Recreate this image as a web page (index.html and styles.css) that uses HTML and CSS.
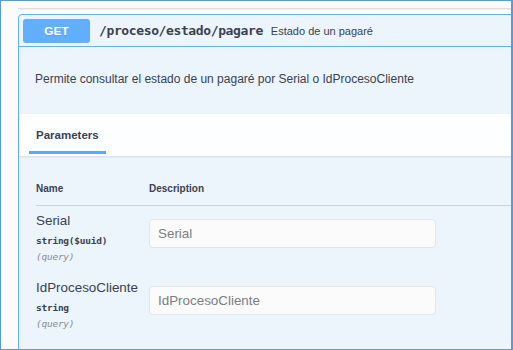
FILE: index.html
```html
<!DOCTYPE html>
<html lang="es">
<head>
<meta charset="utf-8">
<title>GET /proceso/estado/pagare</title>
<link rel="stylesheet" href="styles.css">
</head>
<body>
<div class="frame">
  <div class="topline"></div>
  <div class="opblock">
    <div class="summary">
      <span class="method">GET</span>
      <span class="path">/proceso/estado/pagare</span>
      <span class="summary-desc">Estado de un pagaré</span>
    </div>
    <div class="description">
      <p>Permite consultar el estado de un pagaré por Serial o IdProcesoCliente</p>
    </div>
    <div class="tab-header">
      <div class="tab"><h4>Parameters</h4></div>
    </div>
    <div class="params">
      <div class="param-head">
        <span class="col-name">Name</span>
        <span class="col-desc">Description</span>
      </div>
      <div class="param-row">
        <div class="col-name">
          <div class="param-name">Serial</div>
          <div class="param-type">string($uuid)</div>
          <div class="param-in">(query)</div>
        </div>
        <div class="col-desc">
          <input class="param-input" type="text" placeholder="Serial">
        </div>
      </div>
      <div class="param-row">
        <div class="col-name">
          <div class="param-name">IdProcesoCliente</div>
          <div class="param-type">string</div>
          <div class="param-in">(query)</div>
        </div>
        <div class="col-desc">
          <input class="param-input" type="text" placeholder="IdProcesoCliente">
        </div>
      </div>
    </div>
  </div>
</div>
</body>
</html>
```
FILE: styles.css
```css
* { box-sizing: border-box; }
html, body { margin: 0; padding: 0; background: #fff; }
body { font-family: "Liberation Sans", Arial, sans-serif; color: #3b4151; }

.frame {
  width: 513px;
  height: 350px;
  border: 1px solid #5b9bd5;
  border-right-width: 2px;
  overflow: hidden;
  background: #fcfcfc;
}

.topline {
  margin: 7px 0 4px 17px;
  height: 2px;
  border-top: 1px solid #dedede;
  border-bottom: 1px solid #efefef;
}

.opblock {
  margin-left: 17px;
  margin-right: -30px;
  height: 400px;
  border: 1px solid #61affe;
  border-radius: 4px;
  background: #ecf4fc;
}

.summary {
  display: flex;
  align-items: center;
  height: 32px;
  padding: 0 4px;
  border-bottom: 1px solid #61affe;
}

.method {
  width: 67px;
  height: 24px;
  border-radius: 3px;
  background: #61affe;
  color: #fff;
  font-weight: bold;
  font-size: 11.8px;
  line-height: 24px;
  text-align: center;
  text-shadow: 0 1px 0 rgba(0,0,0,.1);
}

.path {
  margin-left: 9px;
  font-family: "DejaVu Sans Mono", "Liberation Mono", monospace;
  font-weight: bold;
  font-size: 13px;
  letter-spacing: -0.38px;
  color: #3b4151;
}

.summary-desc {
  margin-left: 8px;
  font-size: 11px;
  color: #3b4151;
}

.description {
  height: 67px;
  padding: 24px 16px 0;
}
.description p {
  margin: 0;
  font-size: 12px;
  line-height: 16px;
}

.tab-header {
  height: 42px;
  padding-left: 10px;
  background: rgba(255,255,255,.85);
  box-shadow: 0 1px 2px rgba(0,0,0,.1);
  display: flex;
  align-items: stretch;
}
.tab {
  position: relative;
  padding: 0 7px;
  display: flex;
  align-items: center;
}
.tab h4 {
  margin: 0 0 1px;
  font-size: 11.5px;
  font-weight: bold;
}
.tab::after {
  content: "";
  position: absolute;
  left: 0;
  right: 0;
  bottom: 2px;
  height: 3px;
  background: #5aaaf7;
}

.params { padding: 0 17px; }

.param-head {
  display: flex;
  padding: 27px 0 10px;
  border-bottom: 1px solid rgba(59,65,81,.2);
  font-size: 10px;
  font-weight: bold;
  line-height: 12px;
}

.col-name { width: 113px; flex: none; }
.col-desc { flex: 1; }

.param-row {
  display: flex;
  padding: 7px 0 8px;
}

.param-name {
  font-size: 13.4px;
  line-height: 16px;
}
.param-type {
  padding-top: 4px;
  font-family: "DejaVu Sans Mono", "Liberation Mono", monospace;
  font-weight: bold;
  font-size: 9.5px;
  letter-spacing: -0.25px;
  line-height: 16px;
}
.param-in {
  font-family: "DejaVu Sans Mono", "Liberation Mono", monospace;
  font-style: italic;
  font-size: 9.5px;
  letter-spacing: -0.25px;
  line-height: 16px;
  color: #8a8d94;
}

.param-input {
  display: block;
  margin-top: 6px;
  width: 287px;
  height: 29px;
  padding: 0 8px;
  border: 1px solid #e3e5e8;
  border-radius: 4px;
  background: #fbfbfb;
  font-family: "Liberation Sans", Arial, sans-serif;
  font-size: 13.4px;
  color: #3b4151;
  outline: none;
}
.param-input::placeholder { color: #7b7e84; }
```
